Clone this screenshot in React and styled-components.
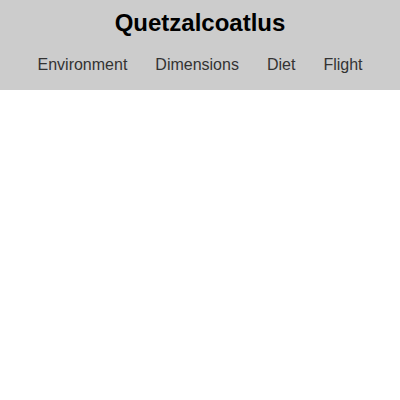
import styled, { createGlobalStyle } from "styled-components";

const GlobalStyle = createGlobalStyle`
  body {
    margin: 0;
    background: #ffffff;
    font-family: "Liberation Sans", Arial, sans-serif;
  }
`;

const NAV_ITEMS = ["Environment", "Dimensions", "Diet", "Flight"];

const App = () => {
  return (
    <>
      <GlobalStyle />
      <Header>
        <Title>Quetzalcoatlus</Title>
        <Nav>
          {NAV_ITEMS.map((item) => (
            <NavLink key={item} href={`#${item.toLowerCase()}`}>
              {item}
            </NavLink>
          ))}
        </Nav>
      </Header>
    </>
  );
};

const Header = styled.header`
  display: flex;
  flex-direction: column;
  align-items: center;
  background-color: #cccccc;
  padding: 9px 0 16px;
`;

const Title = styled.h1`
  margin: 0;
  font-size: 24px;
  line-height: 28px;
  font-weight: 700;
  color: #000000;
`;

const Nav = styled.nav`
  display: flex;
  justify-content: center;
  gap: 28px;
  margin-top: 19px;
`;

const NavLink = styled.a`
  font-size: 16px;
  line-height: 18px;
  color: #333333;
  text-decoration: none;
`;

export default App;
